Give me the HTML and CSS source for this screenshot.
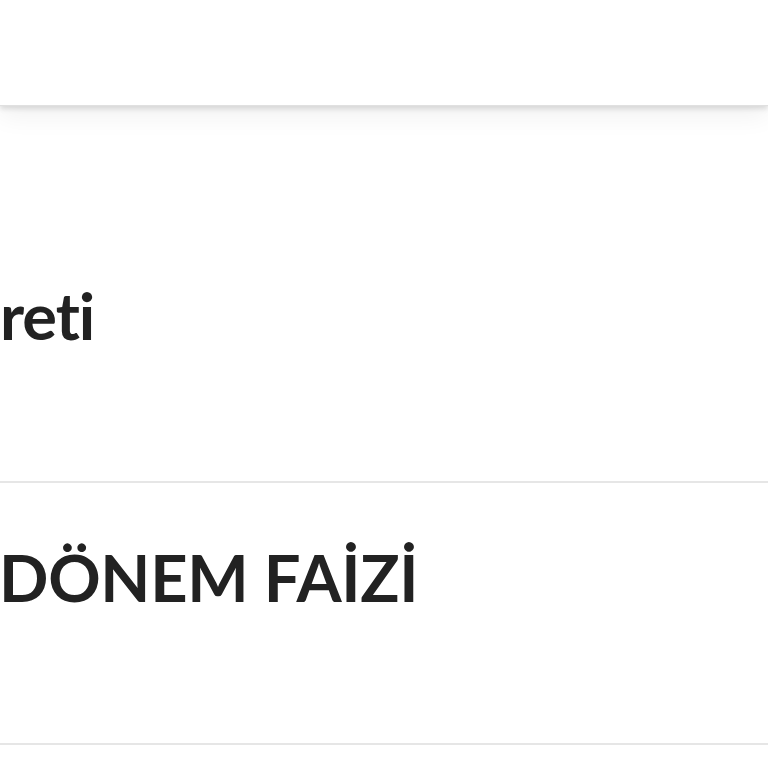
FILE: index.html
```html
<!DOCTYPE html>
<html lang="tr">
<head>
<meta charset="utf-8">
<link rel="stylesheet" href="styles.css">
</head>
<body>
<header class="topbar"></header>
<main class="list">
  <div class="row row-first"><span class="label label-lower">reti</span></div>
  <div class="row row-second"><span class="label label-upper">DÖNEM FAİZİ</span></div>
</main>
</body>
</html>
```
FILE: styles.css
```css
html, body {
  margin: 0;
  padding: 0;
  background: #ffffff;
  width: 768px;
  height: 768px;
  overflow: hidden;
  font-family: "Lato", "Noto Sans", sans-serif;
  color: #222222;
}
.topbar {
  height: 105px;
  background: #ffffff;
  position: relative;
  z-index: 2;
  border-bottom: 1px solid #e0e0e0;
  box-shadow: 0 3px 5px rgba(0,0,0,0.12), 0 10px 24px rgba(0,0,0,0.06);
}
.list {
  display: flex;
  flex-direction: column;
}
.row {
  display: flex;
  align-items: flex-start;
  border-bottom: 2px solid #e6e6e6;
}
.row-first {
  height: 375px;
}
.row-second {
  height: 260px;
}
.label {
  font-weight: 700;
  font-size: 65px;
  line-height: 1;
  white-space: nowrap;
  font-variant-ligatures: none;
  font-feature-settings: "liga" 0, "clig" 0;
}
.label-lower {
  margin-top: 177px;
  letter-spacing: -1px;
}
.label-upper {
  margin-top: 62px;
  margin-left: -1px;
  letter-spacing: -0.3px;
}
```
